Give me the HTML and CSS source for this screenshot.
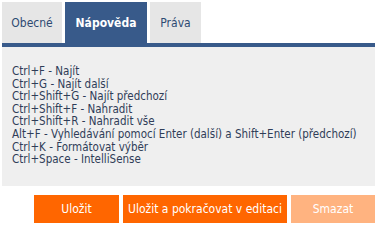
FILE: index.html
```html
<!DOCTYPE html>
<html lang="cs">
<head>
<meta charset="utf-8">
<title>Nápověda</title>
<link rel="stylesheet" href="styles.css">
</head>
<body>
<div class="wrap">
  <div class="tabs">
    <div class="tab t1">Obecné</div>
    <div class="tab active t2">Nápověda</div>
    <div class="tab t3">Práva</div>
  </div>
  <div class="bar"></div>
  <div class="panel">
    <div>Ctrl+F - Najít</div>
    <div>Ctrl+G - Najít další</div>
    <div>Ctrl+Shift+G - Najít předchozí</div>
    <div>Ctrl+Shift+F - Nahradit</div>
    <div>Ctrl+Shift+R - Nahradit vše</div>
    <div>Alt+F - Vyhledávání pomocí Enter (další) a Shift+Enter (předchozí)</div>
    <div>Ctrl+K - Formátovat výběr</div>
    <div>Ctrl+Space - IntelliSense</div>
  </div>
  <div class="buttons">
    <button class="btn b1">Uložit</button>
    <button class="btn b2">Uložit a pokračovat v editaci</button>
    <button class="btn b3 disabled">Smazat</button>
  </div>
</div>
</body>
</html>
```
FILE: styles.css
```css
html, body {
  margin: 0;
  padding: 0;
  background: #ffffff;
}
body {
  font-family: "DejaVu Sans Condensed", "DejaVu Sans", sans-serif;
}
.wrap {
  width: 373px;
  padding: 2px 0 0 2px;
}
.tabs {
  display: flex;
  gap: 3px;
  height: 41px;
}
.tab {
  background: #e6e6e6;
  color: #2e4a72;
  font-size: 12px;
  line-height: 42px;
  text-align: center;
}
.t1 { width: 60px; }
.t2 { width: 82px; }
.t3 { width: 51px; }
.tab.active {
  background: #385a8a;
  color: #ffffff;
  font-weight: bold;
}
.bar {
  height: 4px;
  background: #385a8a;
}
.panel {
  background: #efefef;
  color: #2f3d58;
  font-size: 11.5px;
  line-height: 12.6px;
  padding: 18px 10px 20px 10px;
}
.buttons {
  display: flex;
  justify-content: flex-end;
  gap: 4px;
  margin-top: 9px;
}
.btn {
  border: 0;
  height: 28px;
  background: #ff6600;
  color: #ffffff;
  font-family: "DejaVu Sans Condensed", "DejaVu Sans", sans-serif;
  font-size: 12px;
  padding: 0;
}
.b1 { width: 85px; }
.b2 { width: 164px; }
.b3 { width: 84px; }
.btn.disabled {
  background: #ffb380;
}
```
